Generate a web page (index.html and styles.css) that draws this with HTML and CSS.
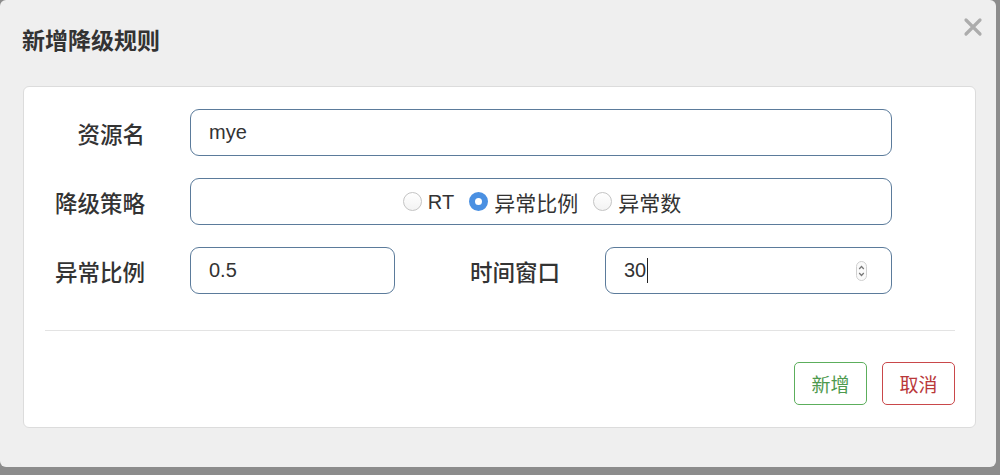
FILE: index.html
```html
<!DOCTYPE html>
<html lang="zh">
<head>
<meta charset="utf-8">
<title>新增降级规则</title>
<link rel="stylesheet" href="styles.css">
</head>
<body>
<div class="dialog">
  <div class="header">
    <div class="title">新增降级规则</div>
    <svg class="close" width="20" height="20" viewBox="0 0 20 20"><path d="M3 3 L17 17 M17 3 L3 17" stroke="#acacac" stroke-width="3.2" stroke-linecap="round"/></svg>
  </div>
  <div class="panel">
    <div class="row">
      <div class="label">资源名</div>
      <div class="field wide"><span class="value">mye</span></div>
    </div>
    <div class="row">
      <div class="label">降级策略</div>
      <div class="field wide center">
        <div class="radios">
          <span class="radio"></span><span class="rlabel latin">RT</span>
          <span class="radio checked"></span><span class="rlabel">异常比例</span>
          <span class="radio"></span><span class="rlabel">异常数</span>
        </div>
      </div>
    </div>
    <div class="row">
      <div class="label">异常比例</div>
      <div class="field small"><span class="value">0.5</span></div>
      <div class="label label2">时间窗口</div>
      <div class="field medium"><span class="value">30</span><span class="caret"></span>
        <svg class="spin" width="11" height="20" viewBox="0 0 11 20"><rect x="0.5" y="0.5" width="10" height="19" rx="5" fill="#fafafa" stroke="#cfcfcf"/><path d="M3.2 8 L5.5 5.5 L7.8 8 M3.2 12 L5.5 14.5 L7.8 12" fill="none" stroke="#777" stroke-width="1.2"/></svg>
      </div>
    </div>
    <div class="divider"></div>
    <div class="actions">
      <button class="btn ok">新增</button>
      <button class="btn cancel">取消</button>
    </div>
  </div>
</div>
</body>
</html>
```
FILE: styles.css
```css
html, body {
  margin: 0;
  padding: 0;
}
body {
  width: 1000px;
  height: 475px;
  overflow: hidden;
  background: #8c8c8c;
  font-family: "Liberation Sans", "Noto Sans CJK SC", sans-serif;
  color: #333;
}
.dialog {
  width: 996px;
  height: 467px;
  box-sizing: border-box;
  background: #efefef;
  border-radius: 6px;
  padding: 0 20px 0 23px;
  display: flex;
  flex-direction: column;
}
.header {
  height: 86px;
  display: flex;
  justify-content: space-between;
  align-items: flex-start;
  flex-shrink: 0;
}
.title {
  font-family: "Noto Sans CJK SC", sans-serif;
  font-size: 23px;
  font-weight: 700;
  line-height: 28px;
  margin-top: 25px;
  margin-left: -1px;
  color: #333;
}
.close {
  margin-top: 17px;
  margin-right: -7px;
}
.panel {
  height: 342px;
  box-sizing: border-box;
  background: #fff;
  border: 1px solid #dcdcdc;
  border-radius: 6px;
  padding-top: 22px;
}
.row {
  display: flex;
  align-items: center;
  height: 47px;
  margin-bottom: 22px;
}
.row:nth-child(3) {
  margin-bottom: 0;
}
.label {
  width: 121px;
  text-align: right;
  font-family: "Noto Sans CJK SC", sans-serif;
  font-size: 22.5px;
  font-weight: 500;
  color: #333;
  flex-shrink: 0;
}
.label2 {
  width: 165px;
  margin-left: 0;
}
.field {
  height: 47px;
  box-sizing: border-box;
  border: 1.5px solid #5b7b9b;
  border-radius: 9px;
  margin-left: 45px;
  display: flex;
  align-items: center;
  padding: 0 18px;
  font-size: 20px;
  color: #333;
  flex-shrink: 0;
}
.wide { width: 702px; }
.small { width: 205px; }
.medium { width: 287px; margin-left: 45px; }
.center { justify-content: center; }
.caret {
  width: 1px;
  height: 25px;
  background: #222;
  margin-left: 1px;
}
.spin {
  margin-left: auto;
  margin-right: 6px;
}
.radios {
  display: flex;
  align-items: center;
  margin-left: 2px;
}
.radio {
  width: 19px;
  height: 19px;
  box-sizing: border-box;
  border-radius: 50%;
  border: 1px solid #c4c4c4;
  background: linear-gradient(#fff, #f3f3f3);
  flex-shrink: 0;
}
.radio.checked {
  border: 6px solid #4a90e2;
  background: #fff;
}
.rlabel {
  font-family: "Noto Sans CJK SC", sans-serif;
  font-size: 21px;
  color: #333;
  margin-left: 6px;
  margin-right: 15px;
  line-height: 26px;
}
.rlabel:last-child { margin-right: 0; }
.rlabel.latin {
  font-family: "Liberation Sans", sans-serif;
  font-size: 20px;
}
.divider {
  height: 1px;
  background: #e3e3e3;
  margin: 36px 20px 0 21px;
}
.actions {
  display: flex;
  justify-content: flex-end;
  gap: 15px;
  margin-top: 31px;
  margin-right: 20px;
}
.btn {
  width: 73px;
  height: 43px;
  box-sizing: border-box;
  background: #fff;
  border-radius: 5px;
  font-family: "Noto Sans CJK SC", sans-serif;
  font-size: 19px;
  padding: 0;
  cursor: pointer;
}
.ok {
  border: 1.5px solid #5cae5c;
  color: #4e9a4e;
}
.cancel {
  border: 1.5px solid #c9484a;
  color: #b9383a;
}
```
